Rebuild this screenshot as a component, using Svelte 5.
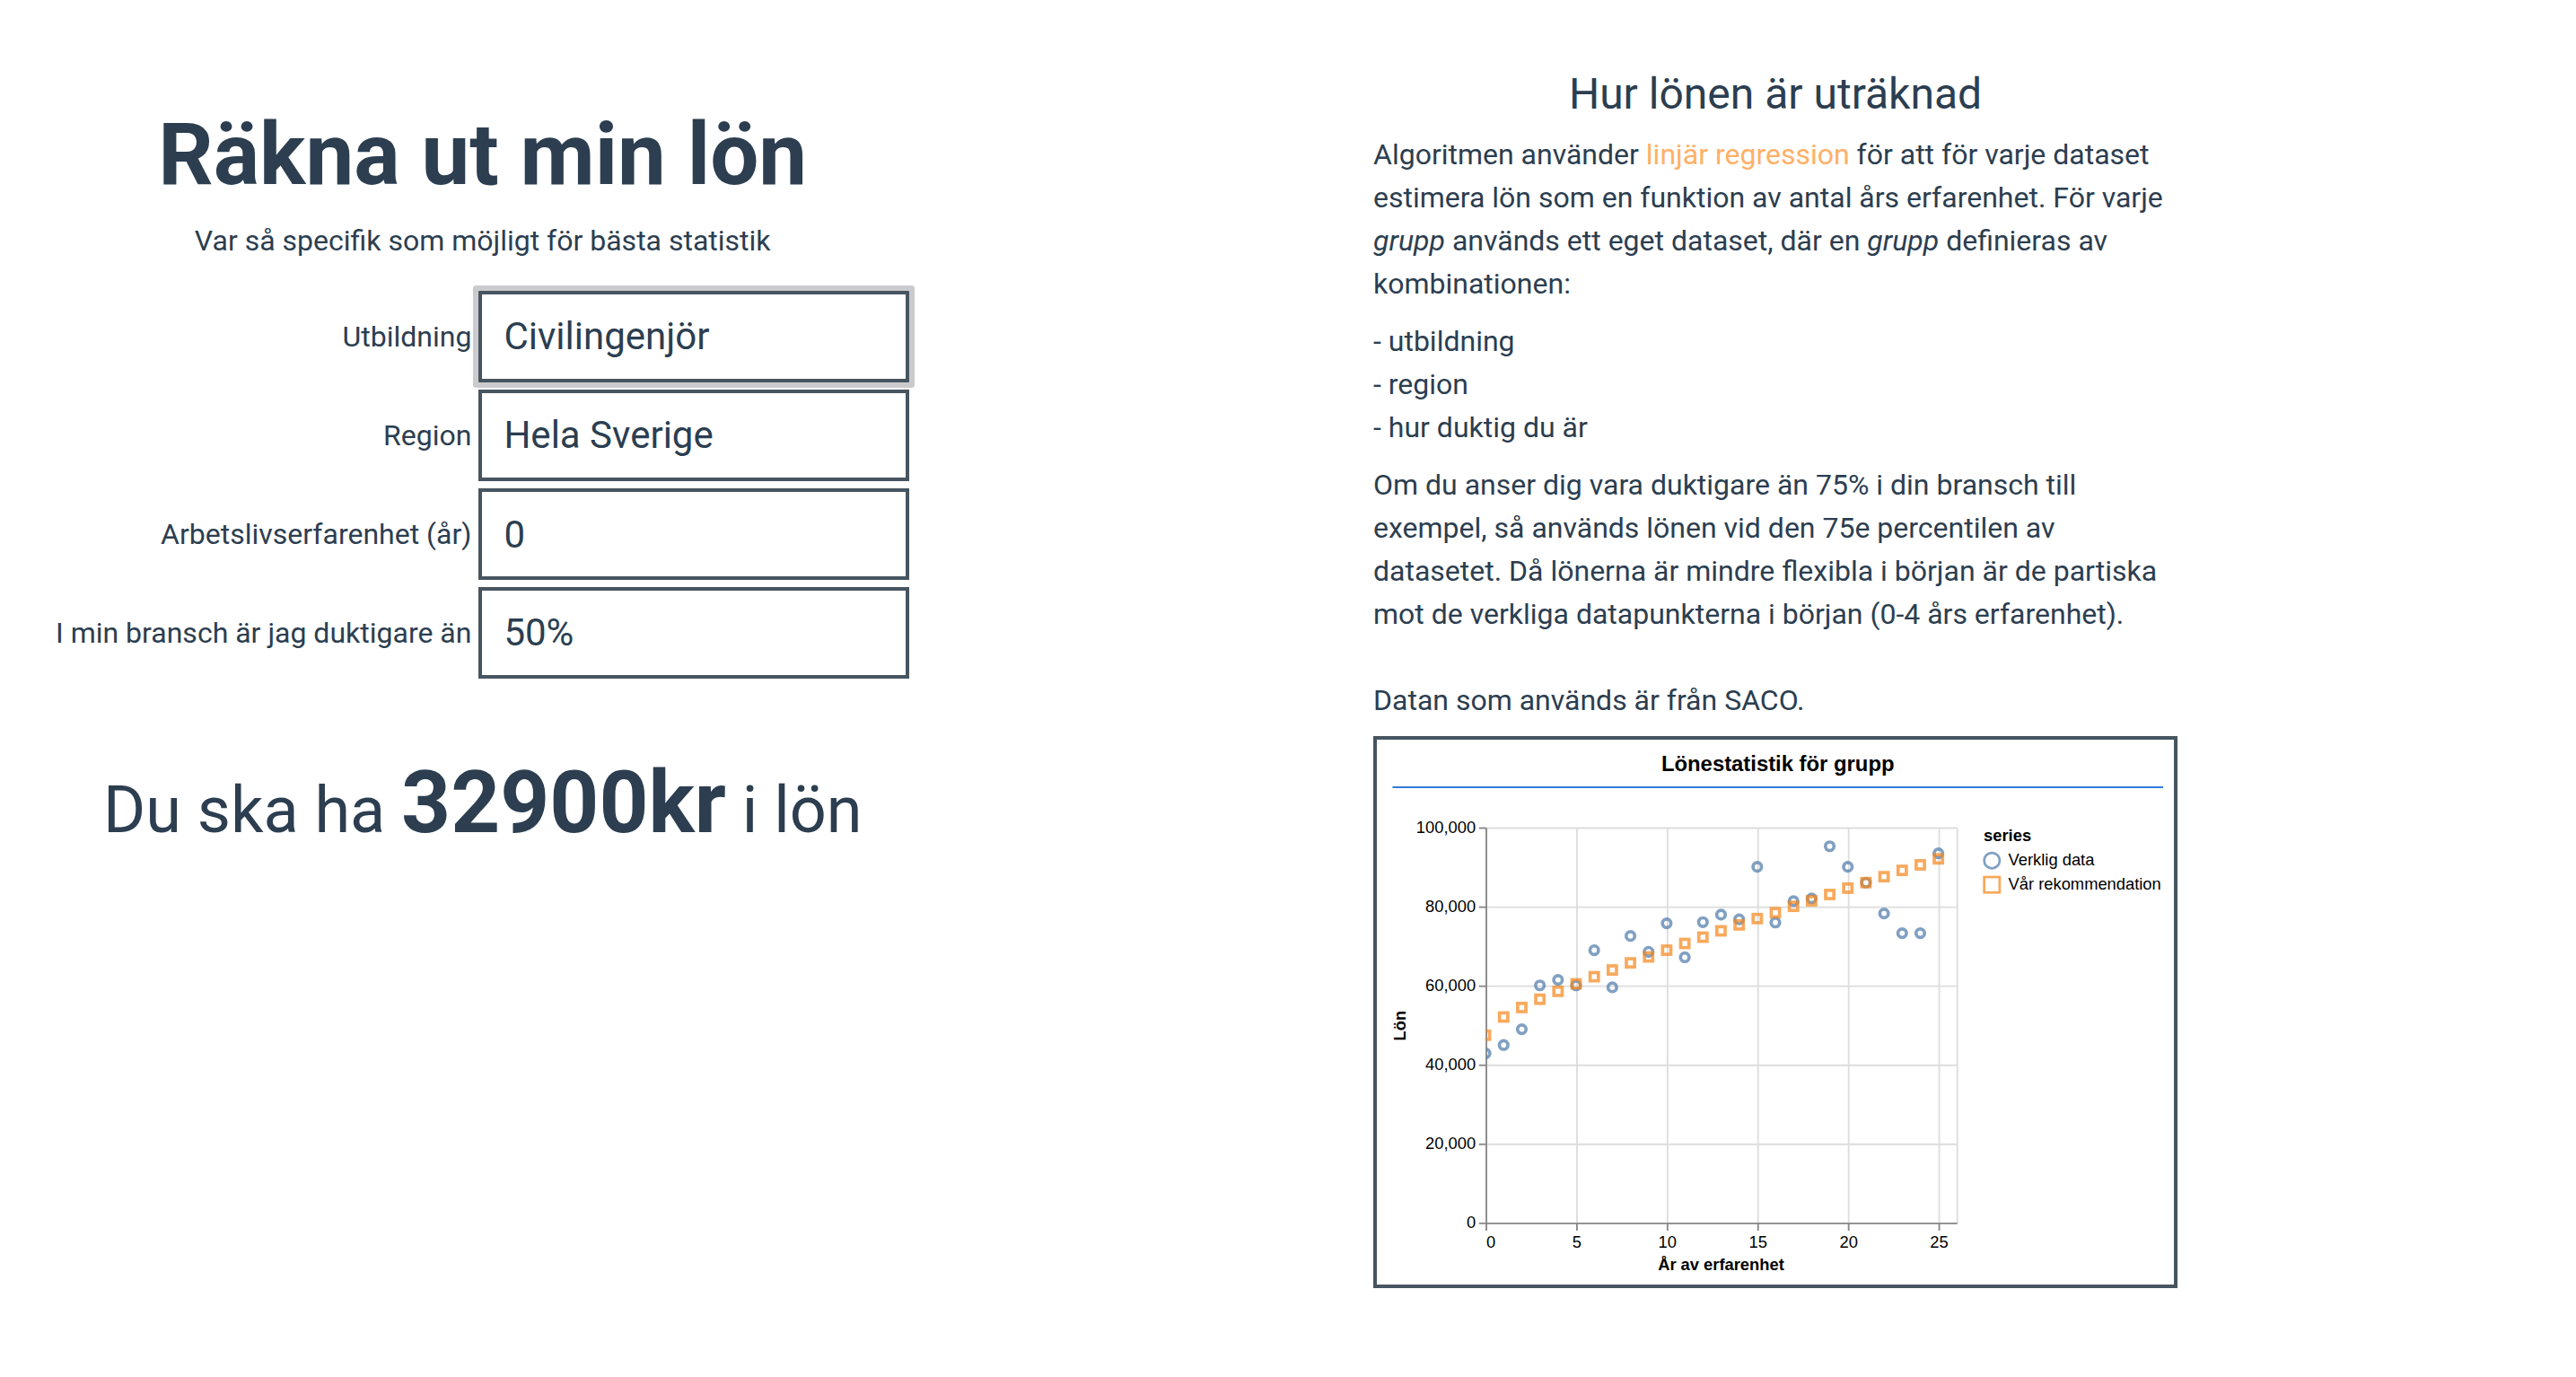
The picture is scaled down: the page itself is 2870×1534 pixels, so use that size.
<script>
  const actual = [
    42.8, 44.9, 48.9, 60, 61.4, 60, 68.9, 59.5, 72.5, 68.5, 75.7, 67.1, 76,
    77.9, 76.7, 90, 75.9, 81.3, 82, 95.2, 90, 86, 78.2, 73.2, 73.2, 93.4
  ];
  const recommended = [
    47.4, 52, 54.4, 56.5, 58.5, 60.4, 62.2, 63.9, 65.7, 67.2, 68.9, 70.6, 72.2,
    73.8, 75.3, 76.9, 78.4, 80, 81.4, 83, 84.6, 86, 87.5, 89.1, 90.5, 92
  ];
  const years = [0, 5, 10, 15, 20, 25];
  const salaries = [0, 20000, 40000, 60000, 80000, 100000];

  const plotWidth = 286;
  const plotHeight = 240;
  const x = (year) => year * 11;
  const y = (thousands) => plotHeight - (thousands / 100) * plotHeight;

  let education = $state('Civilingenjör');
  let region = $state('Hela Sverige');
  let experience = $state('0');
  let percentile = $state('50%');
</script>

<main>
  <section class="calculator">
    <h1>Räkna ut min lön</h1>
    <p class="hint">Var så specifik som möjligt för bästa statistik</p>
    <form>
      <label for="education">Utbildning</label>
      <select id="education" class="field active" bind:value={education}>
        <option>Civilingenjör</option>
      </select>
      <label for="region">Region</label>
      <select id="region" class="field" bind:value={region}>
        <option>Hela Sverige</option>
      </select>
      <label for="experience">Arbetslivserfarenhet (år)</label>
      <input id="experience" class="field" type="text" inputmode="numeric" bind:value={experience} />
      <label for="percentile">I min bransch är jag duktigare än</label>
      <select id="percentile" class="field" bind:value={percentile}>
        <option>50%</option>
      </select>
    </form>
    <p class="result">Du ska ha <strong>32900kr</strong> i lön</p>
  </section>

  <section class="about">
    <div class="article">
      <h2>Hur lönen är uträknad</h2>
      <p>
        Algoritmen använder <a href="#regression">linjär regression</a> för att för varje dataset
        estimera lön som en funktion av antal års erfarenhet. För varje <em>grupp</em> används ett
        eget dataset, där en <em>grupp</em> definieras av kombinationen:
      </p>
      <ul>
        <li>- utbildning</li>
        <li>- region</li>
        <li>- hur duktig du är</li>
      </ul>
      <p>
        Om du anser dig vara duktigare än 75% i din bransch till exempel, så används lönen vid den
        75e percentilen av datasetet. Då lönerna är mindre flexibla i början är de partiska mot de
        verkliga datapunkterna i början (0-4 års erfarenhet).
      </p>
      <p class="source">Datan som används är från SACO.</p>

      <figure>
        <svg viewBox="0 0 484 331" role="img" aria-label="Lönestatistik för grupp">
          <defs>
            <clipPath id="plot"><rect x="0" y="0" width={plotWidth} height={plotHeight} /></clipPath>
          </defs>
          <text class="title" x="243.5" y="19.3" text-anchor="middle">Lönestatistik för grupp</text>
          <line class="rule" x1="9.5" x2="477.5" y1="28.9" y2="28.9" />

          <g transform="translate(66.5 53.7)">
            {#each salaries as s}
              <line class="grid" x1="0" x2={plotWidth} y1={y(s / 1000)} y2={y(s / 1000)} />
            {/each}
            {#each years as t}
              <line class="grid" x1={x(t)} x2={x(t)} y1="0" y2={plotHeight} />
            {/each}
            <line class="grid" x1={plotWidth} x2={plotWidth} y1="0" y2={plotHeight} />

            {#each salaries as s}
              <line class="axis" x1="-4.5" x2="0" y1={y(s / 1000)} y2={y(s / 1000)} />
              <text x="-6.5" y={y(s / 1000) + 2.8} text-anchor="end">{s.toLocaleString('en-US')}</text>
            {/each}
            {#each years as t}
              <line class="axis" x1={x(t)} x2={x(t)} y1={plotHeight} y2={plotHeight + 4.5} />
              <text x={x(t)} y="254.6" text-anchor={t === 0 ? 'start' : 'middle'}>{t}</text>
            {/each}
            <line class="axis" x1="0" x2="0" y1="0" y2={plotHeight} />
            <line class="axis" x1="0" x2={plotWidth} y1={plotHeight} y2={plotHeight} />

            <text class="name" x="142.5" y="268.5" text-anchor="middle">År av erfarenhet</text>
            <text class="name" transform="translate(-48.8 120) rotate(-90)" text-anchor="middle">Lön</text>

            <g clip-path="url(#plot)">
              {#each actual as v, i}
                <circle class="mark blue" cx={x(i) - 0.5} cy={y(v) - 0.5} r="2.6" />
              {/each}
              {#each recommended as v, i}
                <rect class="mark orange" x={x(i) - 3} y={y(v) - 3} width="5" height="5" />
              {/each}
            </g>

            <text class="name" x="302" y="8">series</text>
            <circle class="key blue" cx="307" cy="19.7" r="4.7" />
            <text x="317" y="22.7">Verklig data</text>
            <rect class="key orange" x="302.3" y="29.7" width="9.4" height="9.4" />
            <text x="317" y="37.5">Vår rekommendation</text>
          </g>
        </svg>
      </figure>
    </div>
  </section>
</main>

<style>
  :global(body) {
    margin: 0;
    background: #fff;
  }

  main {
    display: grid;
    grid-template-columns: 1fr 1fr;
    color: #2c3e50;
    font-family: Roboto, 'Liberation Sans', sans-serif;
    font-size: 32px;
    line-height: 48px;
  }

  h1,
  h2,
  p,
  ul,
  figure {
    margin: 0;
  }

  .calculator {
    justify-self: start;
    padding: 100px 60px 0 62px;
    text-align: center;
  }

  h1 {
    font-size: 96px;
    line-height: 144px;
    font-weight: 700;
  }

  form {
    display: grid;
    grid-template-columns: auto 480px;
    gap: 8px;
    align-items: center;
    margin: 32px 0 64px;
  }

  label {
    text-align: right;
  }

  .field {
    box-sizing: border-box;
    width: 100%;
    height: 102px;
    margin: 0;
    padding: 0 24px;
    border: 4px solid #475560;
    border-radius: 0;
    background: #fff;
    color: inherit;
    font-family: inherit;
    font-size: 42px;
    line-height: 64px;
    appearance: none;
    outline: none;
  }

  .active {
    box-shadow: 0 0 0 6px #cbcbce;
    border-radius: 1px;
  }

  .result {
    margin-top: 66px;
    font-size: 72px;
    line-height: 144px;
  }

  strong {
    font-size: 96px;
    font-weight: 700;
  }

  .about {
    padding: 69px 96px 96px 95px;
  }

  .article {
    display: flex;
    flex-direction: column;
    gap: 16px;
    max-width: 896px;
  }

  h2 {
    margin-bottom: -9px;
    font-size: 48px;
    line-height: 72px;
    font-weight: 400;
    text-align: center;
  }

  a {
    color: #ffb067;
    text-decoration: none;
  }

  ul {
    padding: 0;
    list-style: none;
  }

  .source {
    margin-top: 32px;
  }

  figure {
    border: 4px solid #475560;
  }

  svg {
    display: block;
    width: 100%;
    font-family: 'Liberation Sans', Arial, sans-serif;
    font-size: 10px;
  }

  text {
    fill: #000;
  }

  .title {
    font-size: 13px;
    font-weight: 700;
  }

  .name {
    font-weight: 700;
  }

  .rule {
    stroke: #2f7cdc;
  }

  .grid {
    stroke: #ddd;
  }

  .axis {
    stroke: #888;
  }

  .mark,
  .key {
    fill: none;
    opacity: 0.7;
  }

  .mark {
    stroke-width: 2px;
  }

  .key {
    stroke-width: 1.5px;
  }

  .blue {
    stroke: #4c78a8;
  }

  .orange {
    stroke: #f58518;
  }
</style>
